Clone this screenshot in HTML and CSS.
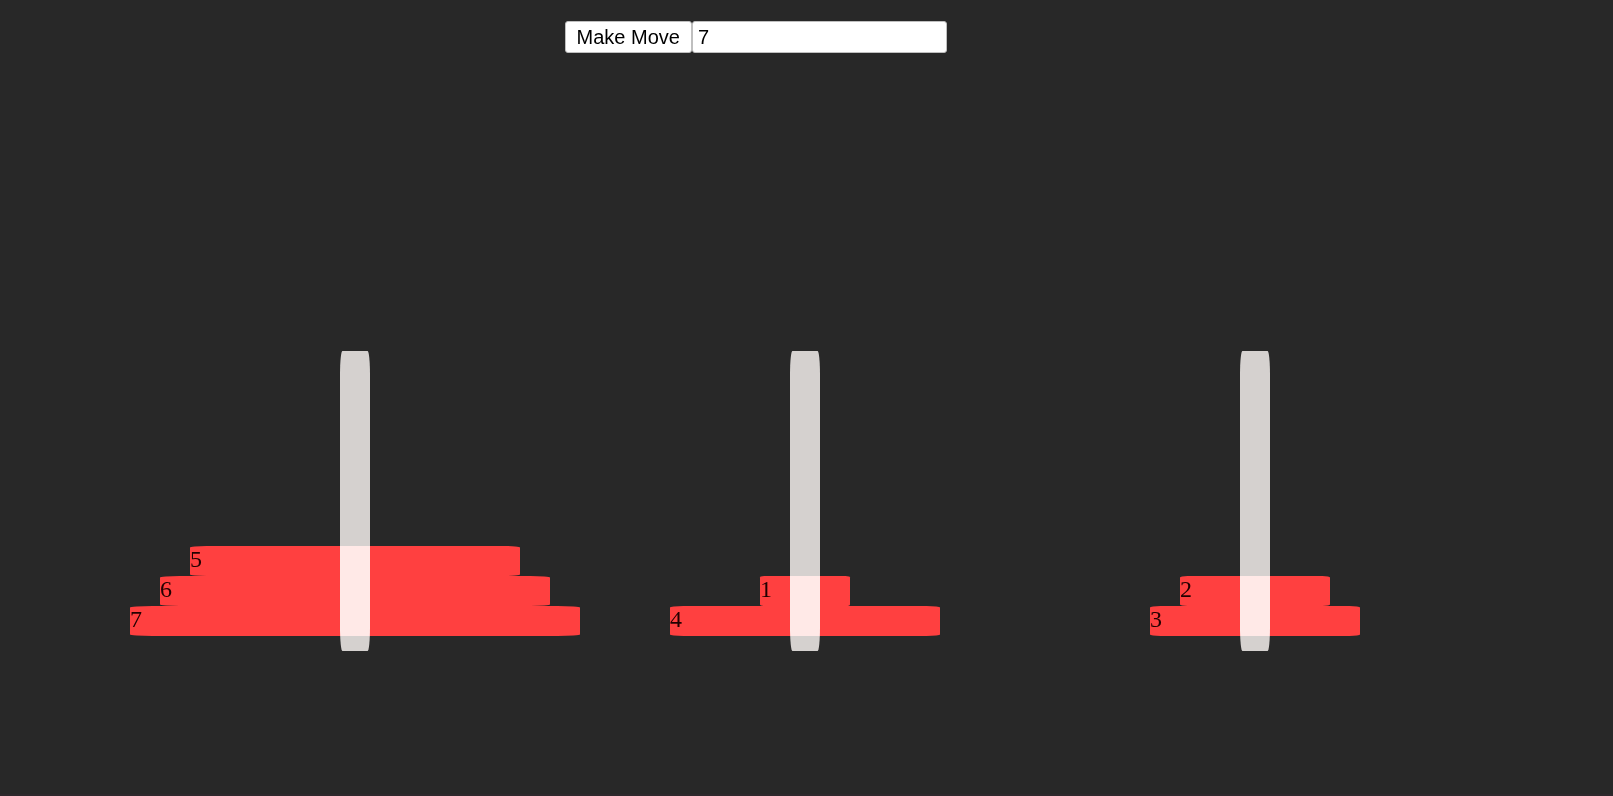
FILE: index.html
```html
<!DOCTYPE html>
<html lang="en">
<head>
<meta charset="utf-8">
<title>Tower of Hanoi</title>
<link rel="stylesheet" href="styles.css">
</head>
<body>
<form class="controls">
  <button class="move" type="button">Make Move</button>
  <input class="count" type="text" value="7" aria-label="Number of discs">
</form>
<main class="board">
  <section class="tower">
    <div class="disc" style="width:330px">5</div>
    <div class="disc" style="width:390px">6</div>
    <div class="disc" style="width:450px">7</div>
    <div class="rod"></div>
  </section>
  <section class="tower">
    <div class="disc" style="width:90px">1</div>
    <div class="disc" style="width:270px">4</div>
    <div class="rod"></div>
  </section>
  <section class="tower">
    <div class="disc" style="width:150px">2</div>
    <div class="disc" style="width:210px">3</div>
    <div class="rod"></div>
  </section>
</main>
</body>
</html>
```
FILE: styles.css
```css
* { box-sizing: border-box; }

body {
  margin: 0;
  min-height: 100vh;
  background: #282828;
  border-bottom: 2px solid #2e282c;
  font-family: "Liberation Serif", "Times New Roman", serif;
  font-size: 24px;
}

.controls {
  display: flex;
  padding: 21px 0 0 35%;
}

.move,
.count {
  height: 32px;
  border: 1px solid #bfbfbf;
  border-radius: 3px;
  background: #fff;
  color: #000;
  font: 20px "Liberation Sans", Arial, sans-serif;
}

.move { padding: 0 11px; }

.count {
  width: 255px;
  padding: 0 5px;
}

.board {
  display: grid;
  grid-template-columns: repeat(3, 1fr);
  margin-top: 298px;
  padding: 0 133px 0 130px;
}

.tower {
  position: relative;
  display: flex;
  flex-direction: column;
  align-items: center;
  justify-content: flex-end;
  height: 300px;
  padding-bottom: 15px;
}

.disc {
  height: 30px;
  border-radius: 5%;
  background: #ff4040;
  color: #200;
  line-height: 26px;
}

/* Glows over the discs it passes through. */
.rod {
  position: absolute;
  inset: 0;
  width: 30px;
  margin: 0 auto;
  border-radius: 8%;
  background: #ada9a7;
  mix-blend-mode: plus-lighter;
}
```
